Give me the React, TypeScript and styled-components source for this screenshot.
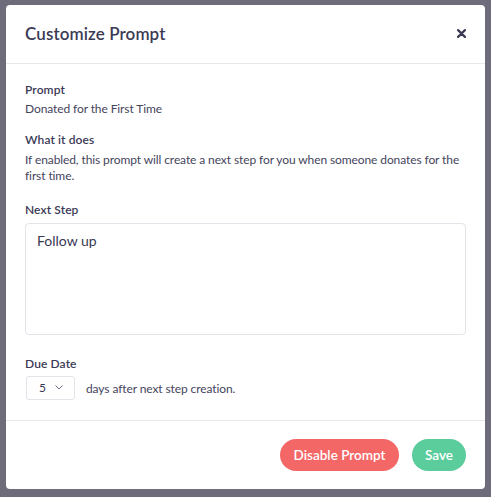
import React from "react";
import styled, { createGlobalStyle } from "styled-components";

const Global = createGlobalStyle`
  html, body { margin: 0; padding: 0; background: #6e6c7b; }
  body { font-family: Lato, "Noto Sans", sans-serif; color: #393853; }
  * { box-sizing: border-box; }
`;

const Page = styled.div`
  width: 491px;
  height: 497px;
  padding: 5px 6px 8px 6px;
  background: #6e6c7b;
`;

const Modal = styled.div`
  width: 479px;
  height: 484px;
  background: #ffffff;
  border-radius: 4px;
  display: flex;
  flex-direction: column;
  overflow: hidden;
`;

const Header = styled.div`
  height: 59px;
  padding: 0 19px 0 19px;
  display: flex;
  align-items: center;
  justify-content: space-between;
  border-bottom: 1px solid #e8e8ec;
`;

const Title = styled.h2`
  margin: 0;
  font-size: 17px;
  font-weight: 600;
  color: #3b3a55;
  letter-spacing: 0.1px;
`;

const CloseButton = styled.button`
  border: none;
  background: none;
  padding: 0;
  width: 9px;
  height: 9px;
  display: flex;
  align-items: center;
  justify-content: center;
  cursor: pointer;
`;

const Body = styled.div`
  flex: 1;
  padding: 18px 19px 20px 19px;
  display: flex;
  flex-direction: column;
  border-bottom: 1px solid #e8e8ec;
`;

const Label = styled.div<{ $top?: number }>`
  font-size: 12px;
  line-height: 16px;
  font-weight: 600;
  letter-spacing: 0.1px;
  color: #3b3a55;
  margin-top: ${(p) => p.$top ?? 0}px;
`;

const Text = styled.p<{ $top?: number }>`
  margin: ${(p) => p.$top ?? 0}px 0 0 0;
  font-size: 12px;
  line-height: 16px;
  letter-spacing: -0.1px;
  color: #45445d;
`;

const TextArea = styled.textarea`
  margin-top: 5px;
  width: 441px;
  height: 112px;
  border: 1px solid #e3e3ea;
  border-radius: 4px;
  padding: 8px 11px;
  font-family: Lato, "Noto Sans", sans-serif;
  font-size: 14px;
  line-height: 18px;
  color: #393853;
  resize: none;
  outline: none;
`;

const DueRow = styled.div`
  margin-top: 4px;
  display: flex;
  align-items: center;
  gap: 11px;
`;

const Select = styled.div`
  width: 49px;
  height: 24px;
  margin-left: 1px;
  border: 1px solid #e3e3ea;
  border-radius: 3px;
  display: flex;
  align-items: center;
  justify-content: space-between;
  padding: 0 11px 0 12px;
  font-size: 12px;
  color: #393853;
`;

const RowText = styled.span`
  font-size: 12px;
  line-height: 16px;
  letter-spacing: -0.1px;
  color: #45445d;
  padding-top: 3px;
`;

const Footer = styled.div`
  height: 69px;
  padding: 0 19px 0 0;
  display: flex;
  align-items: center;
  justify-content: flex-end;
  gap: 13px;
`;

const Button = styled.button<{ $color: string; $width: number }>`
  height: 32px;
  width: ${(p) => p.$width}px;
  border: none;
  border-radius: 16px;
  background: ${(p) => p.$color};
  color: #ffffff;
  font-family: Lato, "Noto Sans", sans-serif;
  font-size: 13.5px;
  font-weight: 600;
  cursor: pointer;
  margin-top: 1px;
`;

export default function App() {
  return (
    <>
      <Global />
      <Page>
        <Modal>
          <Header>
            <Title>Customize Prompt</Title>
            <CloseButton aria-label="Close">
              <svg width="9" height="9" viewBox="0 0 9 9">
                <path d="M1.1 1.1 L7.9 7.9 M7.9 1.1 L1.1 7.9" stroke="#3b3a55" strokeWidth="2.2" strokeLinecap="round" />
              </svg>
            </CloseButton>
          </Header>
          <Body>
            <Label>Prompt</Label>
            <Text $top={3}>Donated for the First Time</Text>
            <Label $top={15}>What it does</Label>
            <Text $top={4}>
              If enabled, this prompt will create a next step for you when someone donates for the first time.
            </Text>
            <Label $top={18}>Next Step</Label>
            <TextArea defaultValue="Follow up" />
            <Label $top={21}>Due Date</Label>
            <DueRow>
              <Select>
                <span>5</span>
                <svg width="8" height="5" viewBox="0 0 8 5">
                  <path d="M0.5 0.5 L4 4 L7.5 0.5" fill="none" stroke="#6b6a80" strokeWidth="1" />
                </svg>
              </Select>
              <RowText>days after next step creation.</RowText>
            </DueRow>
          </Body>
          <Footer>
            <Button $color="#f46767" $width={119}>Disable Prompt</Button>
            <Button $color="#5bcd9c" $width={54}>Save</Button>
          </Footer>
        </Modal>
      </Page>
    </>
  );
}
